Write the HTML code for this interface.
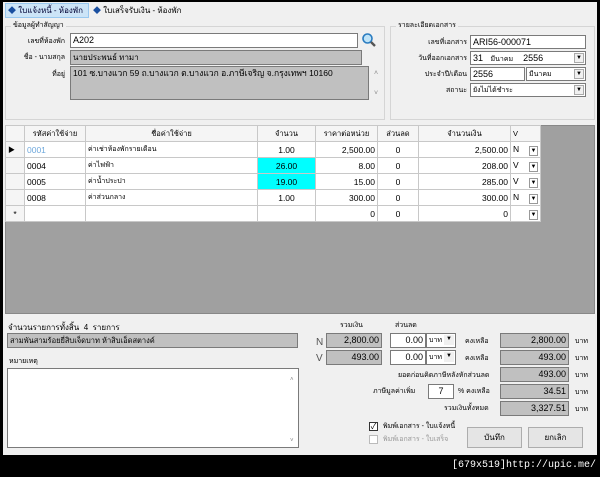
<!DOCTYPE html>
<html><head><meta charset="utf-8"><style>
*{box-sizing:border-box;margin:0;padding:0}
body{width:600px;height:477px;background:#000;position:relative;overflow:hidden;font-family:"Liberation Sans","Noto Sans CJK SC",sans-serif;font-size:8px;color:#000}
.win{position:absolute;left:3px;top:2px;width:594px;height:453px;background:#f0f0f0}
.a{position:absolute;white-space:nowrap;line-height:1}
.box{position:absolute;border:1px solid #7a7a7a;background:#fff;font-size:9px;padding:1px 2px;line-height:11px;white-space:nowrap;overflow:hidden}
.g{background:#c0c0c0}
.r{text-align:right}
.grp{position:absolute;border:1px solid #d5d5d5}
.dd{position:absolute;right:1px;top:1px;width:10px;height:10px;background:#f0f0f0;border:1px solid #aaa;font-size:6px;text-align:center;line-height:9px}
table{position:absolute;left:2px;top:123px;border-collapse:collapse;background:#fff}
td{border:1px solid #c8c8c8;height:16px;font-size:8.5px;padding:0 2px;white-space:nowrap}
.h td{text-align:center;font-size:7.5px;background:#f5f5f5}
.btn{position:absolute;border:1px solid #adadad;background:#e5e5e5;text-align:center;font-size:8px;line-height:19px}
.sd{float:right;border:1px solid #999;width:9px;height:10px;margin-top:2px;font-size:6px;text-align:center;line-height:9px}
</style></head><body>
<div class="win">
<div class="a" style="left:2px;top:1px;width:84px;height:15px;background:#cce4f7;border:1px solid #99c8ef"></div>
<div class="a" style="left:5px;top:5px;font-size:8px;color:#003;"><span style="color:#1a4fa0">◆</span> ใบแจ้งหนี้ - ห้องพัก</div>
<div class="a" style="left:90px;top:5px;font-size:8px"><span style="color:#1a4fa0">◆</span> ใบเสร็จรับเงิน - ห้องพัก</div>

<div class="grp" style="left:2px;top:24px;width:380px;height:94px"></div>
<div class="a" style="left:8px;top:20px;background:#f0f0f0;padding:0 2px;font-size:7px">ข้อมูลผู้ทำสัญญา</div>
<div class="a" style="left:20px;top:36px;width:42px;text-align:right;font-size:7px">เลขที่ห้องพัก</div>
<div class="box" style="left:67px;top:31px;width:288px;height:15px">A202</div>
<svg class="a" style="left:358px;top:30px" width="16" height="16"><circle cx="6.5" cy="6.5" r="4.5" fill="#bfe3f7" stroke="#2a7cc0" stroke-width="1.6"/><path d="M10 10l4 4" stroke="#555" stroke-width="2.4"/></svg>
<div class="a" style="left:20px;top:52px;width:42px;text-align:right;font-size:7px">ชื่อ - นามสกุล</div>
<div class="box g" style="left:67px;top:48px;width:292px;height:15px;font-size:8px">นายประพนธ์ ทามา</div>
<div class="a" style="left:20px;top:69px;width:42px;text-align:right;font-size:7px">ที่อยู่</div>
<div class="box g" style="left:67px;top:64px;width:299px;height:34px;font-size:8.5px">101 ซ.บางแวก 59 ถ.บางแวก ต.บางแวก อ.ภาษีเจริญ จ.กรุงเทพฯ 10160</div>
<div class="a" style="left:371px;top:68px;color:#888;font-size:7px">˄</div>
<div class="a" style="left:371px;top:88px;color:#888;font-size:7px">˅</div>

<div class="grp" style="left:387px;top:24px;width:205px;height:94px"></div>
<div class="a" style="left:393px;top:20px;background:#f0f0f0;padding:0 2px;font-size:7px">รายละเอียดเอกสาร</div>
<div class="a" style="left:410px;top:37px;width:54px;text-align:right;font-size:7px">เลขที่เอกสาร</div>
<div class="box" style="left:467px;top:33px;width:116px;height:14px">ARI56-000071</div>
<div class="a" style="left:410px;top:53px;width:54px;text-align:right;font-size:7px">วันที่ออกเอกสาร</div>
<div class="box" style="left:467px;top:49px;width:116px;height:14px">31 &nbsp; <span style="font-size:7px">มีนาคม</span> &nbsp;&nbsp; 2556<div class="dd">▼</div></div>
<div class="a" style="left:410px;top:69px;width:54px;text-align:right;font-size:7px">ประจำปี/เดือน</div>
<div class="box" style="left:467px;top:65px;width:55px;height:14px">2556</div>
<div class="box" style="left:523px;top:65px;width:60px;height:14px;font-size:7px">มีนาคม<div class="dd">▼</div></div>
<div class="a" style="left:410px;top:85px;width:54px;text-align:right;font-size:7px">สถานะ</div>
<div class="box" style="left:467px;top:81px;width:116px;height:14px;font-size:7px">ยังไม่ได้ชำระ<div class="dd">▼</div></div>

<div class="a" style="left:2px;top:123px;width:590px;height:189px;background:#a0a0a0;border:1px solid #888"></div>
<table>
<tr class="h"><td style="width:19px"></td><td style="width:61px">รหัสค่าใช้จ่าย</td><td style="width:172px">ชื่อค่าใช้จ่าย</td><td style="width:58px">จำนวน</td><td style="width:62px">ราคาต่อหน่วย</td><td style="width:41px">ส่วนลด</td><td style="width:92px">จำนวนเงิน</td><td style="width:30px;text-align:left">V</td></tr>
<tr><td style="background:#f5f5f5;font-size:7px">▶</td><td><span style="color:#6fa8dc">0001</span></td><td style="font-size:7px">ค่าเช่าห้องพักรายเดือน</td><td style="text-align:center">1.00</td><td class="r">2,500.00</td><td style="text-align:center">0</td><td class="r">2,500.00</td><td>N <span class="sd">▼</span></td></tr>
<tr><td style="background:#f5f5f5"></td><td>0004</td><td style="font-size:7px">ค่าไฟฟ้า</td><td style="text-align:center;background:#00ffff">26.00</td><td class="r">8.00</td><td style="text-align:center">0</td><td class="r">208.00</td><td>V <span class="sd">▼</span></td></tr>
<tr><td style="background:#f5f5f5"></td><td>0005</td><td style="font-size:7px">ค่าน้ำประปา</td><td style="text-align:center;background:#00ffff">19.00</td><td class="r">15.00</td><td style="text-align:center">0</td><td class="r">285.00</td><td>V <span class="sd">▼</span></td></tr>
<tr><td style="background:#f5f5f5"></td><td>0008</td><td style="font-size:7px">ค่าส่วนกลาง</td><td style="text-align:center">1.00</td><td class="r">300.00</td><td style="text-align:center">0</td><td class="r">300.00</td><td>N <span class="sd">▼</span></td></tr>
<tr><td style="background:#f5f5f5;text-align:center">*</td><td></td><td></td><td></td><td class="r">0</td><td style="text-align:center">0</td><td class="r">0</td><td><span class="sd">▼</span></td></tr>
</table>

<div class="a" style="left:5px;top:322px;font-size:8px">จำนวนรายการทั้งสิ้น &nbsp;4 &nbsp;รายการ</div>
<div class="box g" style="left:4px;top:331px;width:291px;height:15px;font-size:7.5px">สามพันสามร้อยยี่สิบเจ็ดบาท ห้าสิบเอ็ดสตางค์</div>
<div class="a" style="left:6px;top:356px;font-size:7px">หมายเหตุ</div>
<div class="box" style="left:4px;top:366px;width:292px;height:80px"></div>
<div class="a" style="left:287px;top:375px;color:#888;font-size:6px">˄</div>
<div class="a" style="left:287px;top:436px;color:#888;font-size:6px">˅</div>

<div class="a" style="left:337px;top:320px;font-size:7px">รวมเงิน</div>
<div class="a" style="left:392px;top:320px;font-size:7px">ส่วนลด</div>
<div class="a" style="left:313px;top:336px;font-size:10px;color:#555">N</div>
<div class="box g r" style="left:323px;top:331px;width:56px;height:15px">2,800.00</div>
<div class="box r" style="left:387px;top:331px;width:36px;height:15px">0.00</div>
<div class="box" style="left:423px;top:331px;width:30px;height:15px;font-size:7px">บาท<div class="dd" style="border:none">▼</div></div>
<div class="a" style="left:462px;top:336px;font-size:7px">คงเหลือ</div>
<div class="box g r" style="left:497px;top:331px;width:69px;height:15px">2,800.00</div>
<div class="a" style="left:572px;top:336px;font-size:7px">บาท</div>

<div class="a" style="left:313px;top:352px;font-size:10px;color:#555">V</div>
<div class="box g r" style="left:323px;top:348px;width:56px;height:15px">493.00</div>
<div class="box r" style="left:387px;top:348px;width:36px;height:15px">0.00</div>
<div class="box" style="left:423px;top:348px;width:30px;height:15px;font-size:7px">บาท<div class="dd" style="border:none">▼</div></div>
<div class="a" style="left:462px;top:353px;font-size:7px">คงเหลือ</div>
<div class="box g r" style="left:497px;top:348px;width:69px;height:15px">493.00</div>
<div class="a" style="left:572px;top:353px;font-size:7px">บาท</div>

<div class="a" style="left:395px;top:370px;font-size:7px">ยอดก่อนคิดภาษีหลังหักส่วนลด</div>
<div class="box g r" style="left:497px;top:365px;width:69px;height:15px">493.00</div>
<div class="a" style="left:572px;top:370px;font-size:7px">บาท</div>

<div class="a" style="left:370px;top:386px;font-size:7px">ภาษีมูลค่าเพิ่ม</div>
<div class="box" style="left:425px;top:382px;width:26px;height:15px;text-align:center">7</div>
<div class="a" style="left:455px;top:386px;font-size:7px">% คงเหลือ</div>
<div class="box g r" style="left:497px;top:382px;width:69px;height:15px">34.51</div>
<div class="a" style="left:572px;top:387px;font-size:7px">บาท</div>

<div class="a" style="left:441px;top:403px;font-size:7px">รวมเงินทั้งหมด</div>
<div class="box g r" style="left:497px;top:399px;width:69px;height:15px">3,327.51</div>
<div class="a" style="left:572px;top:404px;font-size:7px">บาท</div>

<div class="a" style="left:366px;top:420px;width:9px;height:9px;border:1px solid #333;background:#fff;font-size:8px;line-height:7px;text-align:center">✓</div>
<div class="a" style="left:380px;top:421px;font-size:7px">พิมพ์เอกสาร - ใบแจ้งหนี้</div>
<div class="a" style="left:366px;top:433px;width:9px;height:9px;border:1px solid #bbb;background:#fff"></div>
<div class="a" style="left:380px;top:434px;font-size:7px;color:#999">พิมพ์เอกสาร - ใบเสร็จ</div>
<div class="btn" style="left:464px;top:425px;width:55px;height:21px">บันทึก</div>
<div class="btn" style="left:525px;top:425px;width:55px;height:21px">ยกเลิก</div>
</div>
<div class="a" style="right:4px;top:461px;color:#fff;font-family:'Liberation Mono',monospace;font-size:10px">[679x519]http://upic.me/</div>
</body></html>
